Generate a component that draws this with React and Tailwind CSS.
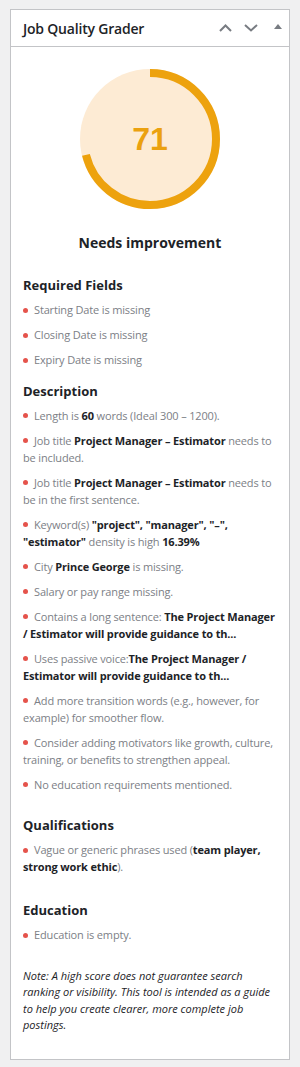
import React from "react";

const Dot = () => (
  <span className="inline-block w-[5px] h-[5px] rounded-full bg-[#e5534b] mr-[6px] align-middle relative top-[-1px]" />
);

const Item = ({ children }) => (
  <li className="mb-[8px] leading-[17px]">
    <Dot />
    {children}
  </li>
);

const B = ({ children }) => <b className="font-bold text-[#1d2327]">{children}</b>;

const Gauge = ({ score }) => {
  const r = 66;
  const c = 2 * Math.PI * r;
  return (
    <div className="relative w-[140px] h-[140px] mx-auto">
      <svg width="140" height="140" viewBox="0 0 140 140">
        <circle cx="70" cy="70" r="70" fill="#fdebd4" />
        <circle
          cx="70"
          cy="70"
          r={r}
          fill="none"
          stroke="#eda20e"
          strokeWidth="8"
          strokeDasharray={c}
          strokeDashoffset={c * (1 - score / 100)}
          transform="rotate(-90 70 70)"
        />
      </svg>
      <span className="absolute inset-0 flex items-center justify-center font-['Liberation_Sans',Arial,sans-serif] font-bold text-[32px] text-[#eba10f]">
        {score}
      </span>
    </div>
  );
};

const App = () => {
  return (
    <div className="min-h-screen bg-[#f0f0f1] pt-[9px] pl-[10px] font-['Open_Sans',sans-serif]">
      <div className="w-[280px] border border-[#c3c4c7] bg-white">
        {/* header */}
        <div className="h-[37px] flex items-center justify-between pl-[12px] pr-[7px] border-b border-[#c3c4c7]">
          <h2 className="text-[14px] font-semibold text-[#1d2327] tracking-[-0.2px]">Job Quality Grader</h2>
          <div className="flex items-center">
            <svg width="13" height="8" viewBox="0 0 13 8" className="mr-[12px]">
              <path d="M1 7 L6.5 1.5 L12 7" fill="none" stroke="#787c82" strokeWidth="2" />
            </svg>
            <svg width="14" height="8" viewBox="0 0 14 8" className="mr-[16px]">
              <path d="M1 1 L7 6.5 L13 1" fill="none" stroke="#787c82" strokeWidth="2" />
            </svg>
            <svg width="8" height="5" viewBox="0 0 8 5" className="mb-[3px]">
              <path d="M0 5 L4 0 L8 5 Z" fill="#787c82" />
            </svg>
          </div>
        </div>

        {/* body */}
        <div className="px-[12px] pt-[22px] pb-[25px] text-[11px] text-[#7c8086] tracking-[-0.15px]">
          <Gauge score={71} />
          <p className="mt-[24px] text-center text-[14px] leading-[20px] font-bold text-[#1d2327] tracking-normal">
            Needs improvement
          </p>

          <h3 className="mt-[22px] mb-[6px] text-[13px] leading-[20px] font-bold text-[#1d2327] tracking-normal">
            Required Fields
          </h3>
          <ul>
            <Item>Starting Date is missing</Item>
            <Item>Closing Date is missing</Item>
            <Item>Expiry Date is missing</Item>
          </ul>

          <h3 className="mt-[12.5px] mb-[6px] text-[13px] leading-[20px] font-bold text-[#1d2327] tracking-normal">
            Description
          </h3>
          <ul>
            <Item>
              Length is <B>60</B> words (Ideal 300 – 1200).
            </Item>
            <Item>
              Job title <B>Project Manager – Estimator</B> needs to be included.
            </Item>
            <Item>
              Job title <B>Project Manager – Estimator</B> needs to be in the first sentence.
            </Item>
            <Item>
              Keyword(s) <B>"project", "manager", "–", "estimator"</B> density is high <B>16.39%</B>
            </Item>
            <Item>
              City <B>Prince George</B> is missing.
            </Item>
            <Item>Salary or pay range missing.</Item>
            <Item>
              Contains a long sentence: <B>The Project Manager / Estimator will provide guidance to th...</B>
            </Item>
            <Item>
              Uses passive voice:<B>The Project Manager / Estimator will provide guidance to th...</B>
            </Item>
            <Item>Add more transition words (e.g., however, for example) for smoother flow.</Item>
            <Item>Consider adding motivators like growth, culture, training, or benefits to strengthen appeal.</Item>
            <Item>No education requirements mentioned.</Item>
          </ul>

          <h3 className="mt-[22.5px] mb-[6px] text-[13px] leading-[20px] font-bold text-[#1d2327] tracking-normal">
            Qualifications
          </h3>
          <ul>
            <Item>
              Vague or generic phrases used (<B>team player, strong work ethic</B>).
            </Item>
          </ul>

          <h3 className="mt-[25px] mb-[6px] text-[13px] leading-[20px] font-bold text-[#1d2327] tracking-normal">
            Education
          </h3>
          <ul>
            <Item>Education is empty.</Item>
          </ul>

          <p className="mt-[25px] italic leading-[16.4px] text-[#1d2327] tracking-normal">
            Note: A high score does not guarantee search ranking or visibility. This tool is intended as a guide
            to help you create clearer, more complete job postings.
          </p>
        </div>
      </div>
    </div>
  );
};

export default App;
